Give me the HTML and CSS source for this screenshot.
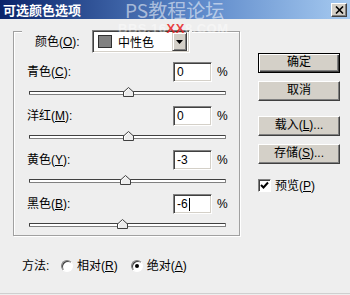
FILE: index.html
```html
<!DOCTYPE html>
<html>
<head>
<meta charset="utf-8">
<link rel="stylesheet" href="styles.css">
</head>
<body>
<div class="win">
  <div class="titlebar">
    <span class="title">可选颜色选项</span>
    <span class="close"><svg width="9" height="8" viewBox="0 0 9 8"><path d="M1 0.5 L8 7.5 M8 0.5 L1 7.5" stroke="#000" stroke-width="1.6"/></svg></span>
  </div>
  <div class="content">
    <div class="main">
      <div class="group">
        <div class="legend">
          <span class="legend-lbl">颜色(<u>O</u>):</span>
          <span class="select">
            <span class="swatch"></span>
            <span class="seltext">中性色</span>
            <span class="arrow"><svg width="7" height="4" viewBox="0 0 7 4"><path d="M0 0 H7 L3.5 4 Z" fill="#000"/></svg></span>
          </span>
        </div>
        <div class="row">
          <div class="row-top"><span class="lbl">青色(<u>C</u>):</span><span class="field">0</span><span class="pct">%</span></div>
          <div class="slider"><div class="track"></div><span class="thumb" style="left:94px"><svg width="11" height="10" viewBox="0 0 11 10"><path d="M0.5 9.5 V5 L5.5 0.5 L10.5 5 V9.5 Z" fill="#ececec" stroke="#404040"/><path d="M1.5 8.5 V5.4 L5.5 1.8" fill="none" stroke="#fff"/></svg></span></div>
        </div>
        <div class="row">
          <div class="row-top"><span class="lbl">洋红(<u>M</u>):</span><span class="field">0</span><span class="pct">%</span></div>
          <div class="slider"><div class="track"></div><span class="thumb" style="left:94px"><svg width="11" height="10" viewBox="0 0 11 10"><path d="M0.5 9.5 V5 L5.5 0.5 L10.5 5 V9.5 Z" fill="#ececec" stroke="#404040"/><path d="M1.5 8.5 V5.4 L5.5 1.8" fill="none" stroke="#fff"/></svg></span></div>
        </div>
        <div class="row">
          <div class="row-top"><span class="lbl">黄色(<u>Y</u>):</span><span class="field">-3</span><span class="pct">%</span></div>
          <div class="slider"><div class="track"></div><span class="thumb" style="left:91px"><svg width="11" height="10" viewBox="0 0 11 10"><path d="M0.5 9.5 V5 L5.5 0.5 L10.5 5 V9.5 Z" fill="#ececec" stroke="#404040"/><path d="M1.5 8.5 V5.4 L5.5 1.8" fill="none" stroke="#fff"/></svg></span></div>
        </div>
        <div class="row last">
          <div class="row-top"><span class="lbl">黑色(<u>B</u>):</span><span class="field">-6<span class="caret"></span></span><span class="pct">%</span></div>
          <div class="slider"><div class="track"></div><span class="thumb" style="left:88px"><svg width="11" height="10" viewBox="0 0 11 10"><path d="M0.5 9.5 V5 L5.5 0.5 L10.5 5 V9.5 Z" fill="#ececec" stroke="#404040"/><path d="M1.5 8.5 V5.4 L5.5 1.8" fill="none" stroke="#fff"/></svg></span></div>
        </div>
      </div>
      <div class="method">
        <span class="method-lbl">方法:</span>
        <span class="radio"></span>
        <span class="radio-lbl">相对(<u>R</u>)</span>
        <span class="radio checked"><span class="dot"></span></span>
        <span class="radio-lbl">绝对(<u>A</u>)</span>
      </div>
    </div>
    <div class="side">
      <div class="btn default">确定</div>
      <div class="btn">取消</div>
      <div class="btn spaced">载入(<u>L</u>)...</div>
      <div class="btn">存储(<u>S</u>)...</div>
      <div class="check-row">
        <span class="checkbox"><svg width="9" height="9" viewBox="0 0 9 9"><path d="M1 4 L3.5 6.5 L8 1.5" fill="none" stroke="#000" stroke-width="2"/></svg></span>
        <span class="check-lbl">预览(<u>P</u>)</span>
      </div>
    </div>
  </div>
  <div class="watermark">PS教程论坛</div>
  <div class="watermark2">BBS.16<span class="red">XX</span>8.COM</div>
</div>
</body>
</html>
```
FILE: styles.css
```css
* { box-sizing: border-box; }
html, body { margin: 0; padding: 0; }
body {
  width: 350px;
  height: 295px;
  overflow: hidden;
  background: #eeeeee;
  font: 12px/16px "Liberation Sans", "Noto Sans CJK SC", sans-serif;
  color: #000;
}
u { text-decoration: underline; text-underline-offset: 1px; }
.win {
  position: relative;
  height: 294px;
  border-bottom: 1px solid #cfcfcf;
}
.titlebar {
  height: 19px;
  background: linear-gradient(to right, #0a246a 0%, #5a86c8 55%, #a6caf0 100%);
  display: flex;
  align-items: center;
  justify-content: space-between;
  padding: 0 3px 0 3px;
}
.title {
  color: #fff;
  font-weight: bold;
  font-size: 13px;
  line-height: 19px;
  font-family: "Noto Sans CJK SC", sans-serif;
}
.close {
  width: 16px;
  height: 14px;
  background: #d4d0c8;
  border: 1px solid;
  border-color: #fff #404040 #404040 #fff;
  box-shadow: inset -1px -1px 0 #808080;
  display: flex;
  align-items: center;
  justify-content: center;
}
.content {
  display: flex;
  align-items: flex-start;
  padding: 12px 0 0 13px;
  border-left: 1px solid #d6d6d6;
  margin-left: -1px;
}
.main { width: 227px; }
.group {
  border: 1px solid #a0a0a0;
  box-shadow: inset 1px 1px 0 #fff, 1px 1px 0 #fff;
  padding: 0 13px 6px 13px;
}
.legend {
  display: flex;
  align-items: center;
  width: fit-content;
  margin: -2px 0 0 -5px;
  padding: 0 2px 0 13px;
  background: #eeeeee;
  height: 23px;
}
.legend-lbl { width: 57px; }
.select {
  width: 98px;
  height: 23px;
  background: #fff;
  border: 1px solid;
  border-color: #808080 #fff #fff #808080;
  box-shadow: inset 1px 1px 0 #404040, inset -1px -1px 0 #d4d0c8;
  display: flex;
  align-items: center;
  padding: 0 2px 0 5px;
}
.swatch {
  width: 14px;
  height: 13px;
  background: #808080;
  border: 1px solid #303030;
}
.seltext {
  margin-left: 6px;
  flex: 1;
  font-family: "Noto Sans CJK SC", sans-serif;
}
.arrow {
  width: 15px;
  height: 19px;
  background: #d4d0c8;
  border: 1px solid;
  border-color: #d4d0c8 #404040 #404040 #d4d0c8;
  box-shadow: inset 1px 1px 0 #fff, inset -1px -1px 0 #808080;
  display: flex;
  align-items: center;
  justify-content: center;
}
.row { margin-top: 9px; }
.row-top {
  display: flex;
  align-items: center;
  height: 20px;
}
.lbl { flex: 1; }
.field {
  width: 39px;
  height: 20px;
  background: #fff;
  border: 1px solid;
  border-color: #808080 #fff #fff #808080;
  box-shadow: inset 1px 1px 0 #404040, inset -1px -1px 0 #d4d0c8;
  padding: 1px 0 0 3px;
  line-height: 17px;
  display: flex;
  align-items: center;
}
.caret {
  display: inline-block;
  width: 1px;
  height: 13px;
  background: #000;
  margin-left: 1px;
}
.pct { width: 9px; margin-left: 5px; }
.slider {
  position: relative;
  margin: 5px 0 0 2px;
  height: 10px;
  width: 197px;
  padding-top: 4px;
}
.track {
  height: 4px;
  background: #fff;
  border: 1px solid;
  border-color: #404040 #808080 #808080 #404040;
  border-radius: 1px;
}
.thumb {
  position: absolute;
  top: 0;
  width: 11px;
  height: 10px;
  display: block;
}
.thumb svg { display: block; }
.method {
  display: flex;
  align-items: center;
  height: 16px;
  margin-top: 22px;
  padding-left: 9px;
}
.method-lbl { width: 39px; }
.radio {
  width: 12px;
  height: 12px;
  border-radius: 50%;
  background: #fff;
  border: 1px solid;
  border-color: #808080 #fff #fff #808080;
  box-shadow: inset 1px 1px 0 #404040;
  display: flex;
  align-items: center;
  justify-content: center;
}
.radio-lbl { margin-left: 4px; margin-right: 13px; }
.dot { width: 4px; height: 4px; border-radius: 50%; background: #000; }
.side {
  width: 82px;
  margin-left: 18px;
  margin-top: 22px;
  display: flex;
  flex-direction: column;
}
.btn {
  height: 20px;
  background: #d4d0c8;
  border: 1px solid;
  border-color: #fff #404040 #404040 #fff;
  box-shadow: inset -1px -1px 0 #808080;
  text-align: center;
  line-height: 17px;
  margin-bottom: 8px;
}
.btn.default {
  border-color: #000;
  box-shadow: inset 1px 1px 0 #fff, inset -1px -1px 0 #404040, inset -2px -2px 0 #808080;
}
.btn.spaced { margin-top: 7px; }
.check-row {
  display: flex;
  align-items: center;
  margin-top: 7px;
  height: 13px;
}
.checkbox {
  width: 13px;
  height: 13px;
  background: #fff;
  border: 1px solid;
  border-color: #808080 #fff #fff #808080;
  box-shadow: inset 1px 1px 0 #404040;
  display: flex;
  align-items: center;
  justify-content: center;
}
.check-lbl { margin-left: 4px; }
.watermark {
  position: absolute;
  left: 125px;
  top: 0;
  font: 19px/20px "Noto Sans CJK SC", sans-serif;
  color: rgba(255, 255, 255, 0.55);
}
.watermark2 {
  position: absolute;
  left: 118px;
  top: 22px;
  font: bold 13px/14px "Liberation Sans", sans-serif;
  color: rgba(255, 255, 255, 0.45);
  letter-spacing: 0.5px;
}
.watermark2 .red { color: rgba(230, 30, 30, 0.85); }
```
